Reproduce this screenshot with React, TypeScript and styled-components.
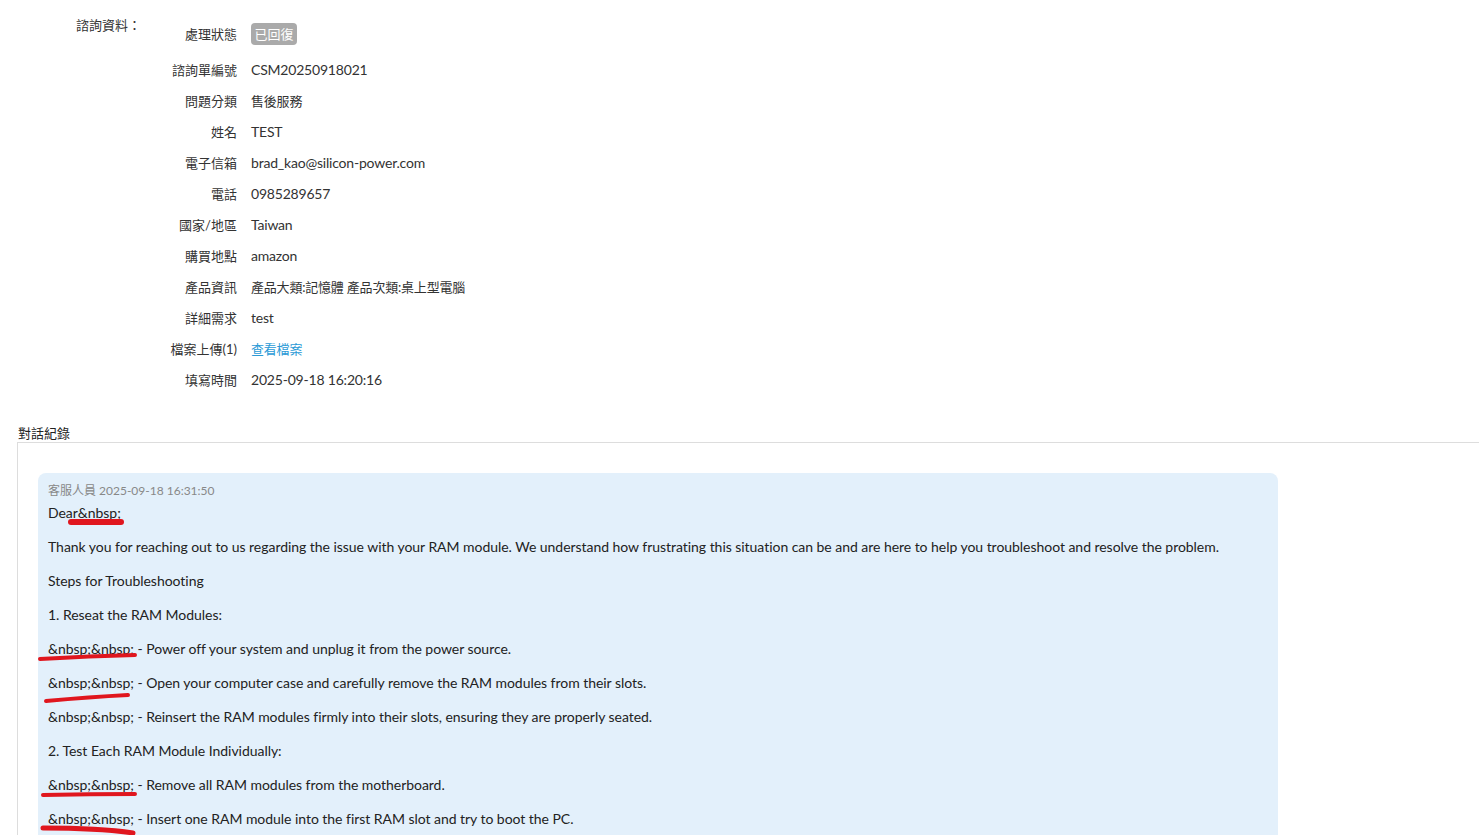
import React from "react";
import styled, { createGlobalStyle } from "styled-components";

const Global = createGlobalStyle`
  html, body { margin: 0; padding: 0; background: #fff; }
  body {
    font-family: "Lato", "Noto Sans CJK TC", sans-serif;
    color: #333;
    font-size: 14px;
    overflow-x: hidden;
  }
`;

const Page = styled.div`
  position: relative;
  width: 1479px;
`;

const InfoSection = styled.section`
  display: flex;
  padding: 13px 0 0 76px;
`;

const SectionTitle = styled.div`
  width: 80px;
  font-size: 13px;
  line-height: 18px;
  margin-top: 3px;
  color: #333;
`;

const InfoTable = styled.div`
  display: flex;
  flex-direction: column;
`;

const Row = styled.div<{ $tall?: boolean }>`
  display: grid;
  grid-template-columns: 81px 1fr;
  column-gap: 14px;
  align-items: center;
  height: ${(p) => (p.$tall ? 41 : 31)}px;
  line-height: 20px;
`;

const Label = styled.div`
  text-align: right;
  font-size: 13px;
  color: #333;
  white-space: nowrap;
`;

const Value = styled.div<{ $cjk?: boolean }>`
  font-size: ${(p) => (p.$cjk ? 13 : 14)}px;
  color: #333;
  white-space: nowrap;
  letter-spacing: -0.2px;
`;

const Badge = styled.span`
  display: inline-flex;
  align-items: center;
  justify-content: center;
  width: 46px;
  height: 22px;
  border-radius: 4px;
  background: #aaaaaa;
  color: #fff;
  font-size: 13px;
  letter-spacing: 0;
`;

const Link = styled.a`
  color: #2a9ad6;
  text-decoration: none;
  font-size: 13px;
`;

const ChatSection = styled.section`
  padding: 30px 0 0 17px;
`;

const ChatTitle = styled.div`
  font-size: 13px;
  line-height: 17px;
  color: #222;
  padding-left: 1px;
`;

const ChatBox = styled.div`
  border: 1px solid #dddddd;
  border-right: none;
  border-bottom: none;
  padding: 30px 0 0 20px;
`;

const Bubble = styled.div`
  width: 1220px;
  background: #e3f0fb;
  border-radius: 8px;
  padding: 10px 10px 4px 10px;
`;

const Meta = styled.div`
  font-size: 12px;
  line-height: 16px;
  color: #888;
  margin-bottom: 4px;
`;

const Para = styled.p`
  margin: 0 0 14px 0;
  font-size: 14px;
  line-height: 20px;
  color: #222;
  letter-spacing: -0.04px;
`;

const Marks = styled.svg`
  position: absolute;
  left: 0;
  top: 0;
  pointer-events: none;
`;

const rows: { label: string; value: React.ReactNode; cjk?: boolean }[] = [
  { label: "諮詢單編號", value: "CSM20250918021" },
  { label: "問題分類", value: "售後服務", cjk: true },
  { label: "姓名", value: "TEST" },
  { label: "電子信箱", value: "brad_kao@silicon-power.com" },
  { label: "電話", value: "0985289657" },
  { label: "國家/地區", value: "Taiwan" },
  { label: "購買地點", value: "amazon" },
  { label: "產品資訊", value: "產品大類:記憶體 產品次類:桌上型電腦", cjk: true },
  { label: "詳細需求", value: "test" },
  { label: "檔案上傳(1)", value: <Link href="#">查看檔案</Link> },
  { label: "填寫時間", value: "2025-09-18 16:20:16" },
];

const paragraphs = [
  "Thank you for reaching out to us regarding the issue with your RAM module. We understand how frustrating this situation can be and are here to help you troubleshoot and resolve the problem.",
  "Steps for Troubleshooting",
  "1. Reseat the RAM Modules:",
  "&nbsp;&nbsp; - Power off your system and unplug it from the power source.",
  "&nbsp;&nbsp; - Open your computer case and carefully remove the RAM modules from their slots.",
  "&nbsp;&nbsp; - Reinsert the RAM modules firmly into their slots, ensuring they are properly seated.",
  "2. Test Each RAM Module Individually:",
  "&nbsp;&nbsp; - Remove all RAM modules from the motherboard.",
  "&nbsp;&nbsp; - Insert one RAM module into the first RAM slot and try to boot the PC.",
];

export default function App() {
  return (
    <Page>
      <Global />
      <InfoSection>
        <SectionTitle>諮詢資料：</SectionTitle>
        <InfoTable>
          <Row $tall>
            <Label>處理狀態</Label>
            <Value>
              <Badge>已回復</Badge>
            </Value>
          </Row>
          {rows.map((r) => (
            <Row key={r.label}>
              <Label>{r.label}</Label>
              <Value $cjk={r.cjk}>{r.value}</Value>
            </Row>
          ))}
        </InfoTable>
      </InfoSection>
      <ChatSection>
        <ChatTitle>對話紀錄</ChatTitle>
        <ChatBox>
          <Bubble>
            <Meta>客服人員 2025-09-18 16:31:50</Meta>
            <Para>{"Dear&nbsp;"}</Para>
            {paragraphs.map((t, i) => (
              <Para key={i}>{t}</Para>
            ))}
          </Bubble>
        </ChatBox>
      </ChatSection>
      <Marks width="1479" height="835" viewBox="0 0 1479 835">
        <g stroke="#e0161e" strokeLinecap="round" fill="none">
          <path d="M71 522 L121 522" strokeWidth="6" />
          <path d="M40 659 Q90 656 135 655" strokeWidth="4" />
          <path d="M46 701 Q90 697 128 695" strokeWidth="4" />
          <path d="M43 795 Q90 794 135 794" strokeWidth="4" />
          <path d="M43 828 Q100 828 133 833" strokeWidth="5" />
        </g>
      </Marks>
    </Page>
  );
}
